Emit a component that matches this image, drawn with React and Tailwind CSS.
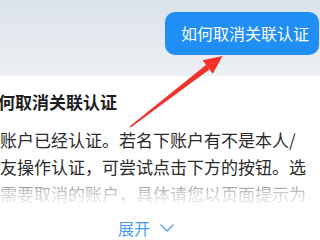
import React from 'react';

const FONT = { fontFamily: '"Noto Sans CJK SC", "Noto Sans", sans-serif' };

function RedArrow() {
    // hand-drawn style pointer from the card title up to the button
    return (
        <svg className="absolute inset-0 pointer-events-none" width="320" height="240" viewBox="0 0 320 240">
            <polygon points="129.5,126.6 130.6,127.4 209.4,69.6 206.2,64.8" fill="#f2312b" />
            <polygon points="222.5,56 202.6,60.2 212.8,73.8" fill="#f2312b" />
        </svg>
    );
}

function ChevronDown() {
    return (
        <svg width="14" height="8" viewBox="0 0 14 8" className="ml-[10px] mt-[1px]">
            <path d="M1 1 L7 7 L13 1" fill="none" stroke="#6aaaf0" strokeWidth="1.6" strokeLinecap="round" strokeLinejoin="round" />
        </svg>
    );
}

export default function App() {
    return (
        <div className="relative w-[320px] h-[240px] overflow-hidden bg-white" style={FONT}>
            {/* Header band */}
            <div className="h-[76px] bg-gradient-to-b from-[#dbe2ea] to-[#edf0f4] flex justify-end items-start pt-[12px] pr-[1px]">
                <button className="w-[154px] h-[43px] rounded-[10px] bg-[#1f8ef5] text-white text-[16px] text-left pl-[16px] leading-[43px]">
                    如何取消关联认证
                </button>
            </div>

            {/* Card */}
            <div className="relative bg-white pt-[12px] whitespace-nowrap">
                <div className="ml-[-19px] text-[17px] leading-[27px] font-bold text-[#1e1e1e]">如何取消关联认证</div>
                <div className="mt-[11px] text-[17px] leading-[27px] text-[#2b2b2b]">
                    <div>账户已经认证。若名下账户有不是本人/</div>
                    <div>友操作认证，可尝试点击下方的按钮。选</div>
                    <div>需要取消的账户，具体请您以页面提示为</div>
                </div>
                {/* fade over the last visible line */}
                <div className="absolute left-0 right-0 top-[102px] h-[30px] bg-gradient-to-b from-white/30 via-white/75 to-white" />
                <div className="relative flex items-center pl-[118px] mt-[7px] h-[27px] text-[16px] text-[#4b9bf2]">
                    展开
                    <ChevronDown />
                </div>
            </div>

            <RedArrow />
        </div>
    );
}
